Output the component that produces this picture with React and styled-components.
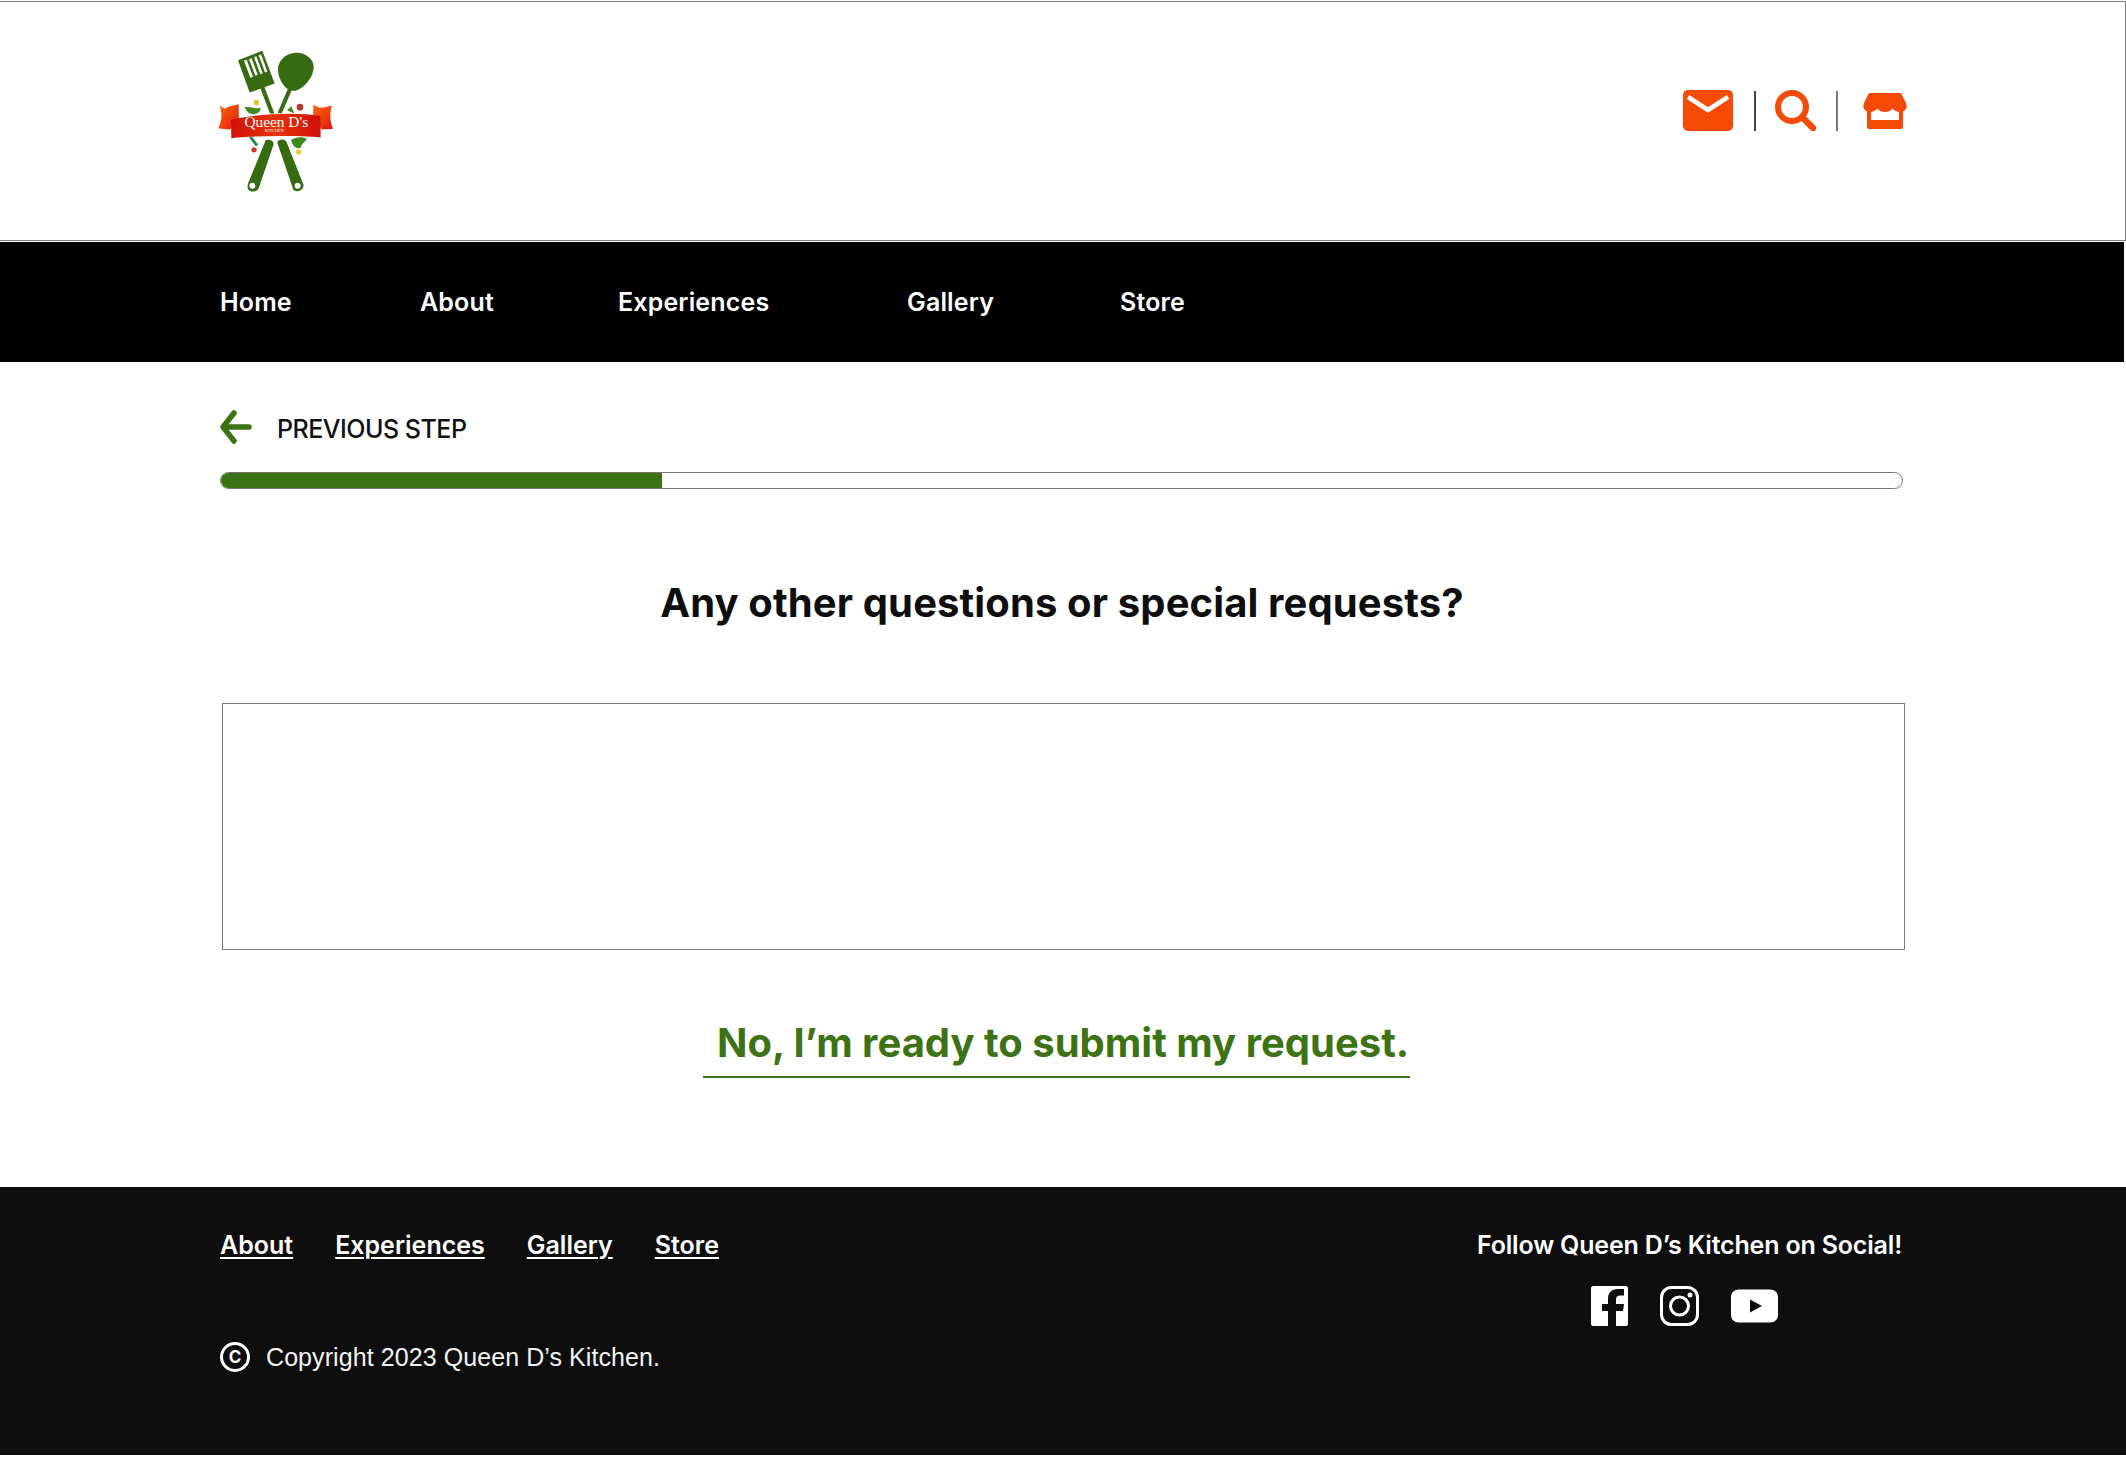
import React from "react";
import styled, { createGlobalStyle } from "styled-components";

const Global = createGlobalStyle`
  html, body { margin: 0; padding: 0; background: #fff; }
  body { font-family: Inter, "Liberation Sans", sans-serif; color: #0e0e0e; }
  * { box-sizing: border-box; }
`;
const Page = styled.div`
  width: 2126px;
  min-height: 1459px;
  display: flex;
  flex-direction: column;
`;
const Header = styled.header`
  height: 240px;
  margin: 1px 0 1px;
  border-top: 1px solid #808080;
  border-right: 1px solid #808080;
  border-bottom: 1px solid #808080;
  padding: 48px 218px 0 218px;
  display: flex;
  justify-content: space-between;
  align-items: flex-start;
`;
const Logo = styled.svg`
  width: 115px;
  height: 142px;
  display: block;
`;
const HeaderIcons = styled.div`
  display: flex;
  align-items: center;
  margin-top: 40px;
`;
const Sep = styled.span`
  width: 2px;
  height: 40px;
  background: ${(p) => p.$c};
  margin: 0 ${(p) => p.$r}px 0 ${(p) => p.$l}px;
`;
const IconSvg = styled.svg`
  display: block;
  flex: none;
`;
const NavBar = styled.nav`
  height: 120px;
  margin-right: 2px;
  background: #000;
  padding-left: 220px;
  display: grid;
  grid-template-columns: 200px 198px 289px 213px auto;
  align-items: center;
`;
const NavLink = styled.a`
  color: #fff;
  font-size: 25px;
  font-weight: 600;
  line-height: 1;
  letter-spacing: 0.15px;
`;
const Main = styled.main`
  flex: 1;
  padding: 0 222px 0 220px;
  display: flex;
  flex-direction: column;
`;
const Back = styled.div`
  display: flex;
  align-items: center;
  gap: 24px;
  height: 34px;
  margin-top: 48px;
`;
const BackText = styled.span`
  font-size: 25px;
  font-weight: 500;
  color: #111;
  letter-spacing: -0.5px;
  margin-top: 3px;
`;
const Track = styled.div`
  width: 1683px;
  height: 17px;
  margin-top: 28px;
  border: 1px solid #777;
  border-radius: 9px;
  overflow: hidden;
  background: #fff;
`;
const Fill = styled.div`
  height: 100%;
  background: #3d7314;
`;
const Title = styled.h1`
  margin: 90px 0 0;
  font-size: 40px;
  line-height: 48px;
  font-weight: 700;
  text-align: center;
  color: #0e0e0e;
  letter-spacing: 0.12px;
`;
const Box = styled.textarea`
  display: block;
  width: 1683px;
  height: 247px;
  margin: 76px 0 0 2px;
  border: 1px solid #7a7a7a;
  border-radius: 0;
  background: #fff;
  resize: none;
  outline: none;
`;
const SubmitRow = styled.div`
  display: flex;
  justify-content: flex-start;
  margin: 69px 0 0 483px;
`;
const Submit = styled.a`
  display: block;
  width: 707px;
  padding: 0 0 9px 14px;
  border-bottom: 2px solid #3d7314;
  color: #3d7314;
  font-size: 40px;
  line-height: 48px;
  font-weight: 700;
  white-space: nowrap;
`;
const Footer = styled.footer`
  height: 268px;
  margin-bottom: 4px;
  background: #0e0e0e;
  color: #fff;
  padding: 42px 224px 0 220px;
  display: flex;
  justify-content: space-between;
  align-items: flex-start;
`;
const FootLeft = styled.div`
  display: flex;
  flex-direction: column;
`;
const FootLinks = styled.div`
  display: flex;
  gap: 42px;
`;
const FootLink = styled.a`
  color: #fff;
  font-size: 25px;
  line-height: 32px;
  font-weight: 600;
  text-decoration: underline;
  text-underline-offset: 3px;
  text-decoration-thickness: 2px;
`;
const Copy = styled.div`
  display: flex;
  align-items: center;
  gap: 16px;
  margin-top: 80px;
`;
const CopyMark = styled.span`
  width: 30px;
  height: 30px;
  border: 3px solid #fff;
  border-radius: 50%;
  display: flex;
  align-items: center;
  justify-content: center;
  font-size: 17px;
  font-weight: 700;
  line-height: 1;
`;
const CopyText = styled.span`
  font-family: "Liberation Sans", Arial, sans-serif;
  font-size: 25px;
  line-height: 32px;
  color: #f4f4f4;
  letter-spacing: 0.08px;
`;
const FootRight = styled.div`
  display: flex;
  flex-direction: column;
  align-items: flex-end;
`;
const Follow = styled.div`
  font-size: 25px;
  line-height: 32px;
  font-weight: 600;
  letter-spacing: -0.18px;
`;
const Socials = styled.div`
  display: flex;
  align-items: center;
  height: 40px;
  margin: 25px 124px 0 0;
  gap: 32px;
`;

const leaf = "#3f8a1e";
const QueenLogo = () => (
  <Logo viewBox="85 60 345 425" aria-label="Queen D's Kitchen">
    <defs>
      <linearGradient id="ban" x1="0" x2="1" y1="0" y2="0">
        <stop offset="0" stopColor="#d2100a" />
        <stop offset="0.5" stopColor="#e8340a" />
        <stop offset="1" stopColor="#ce0f0c" />
      </linearGradient>
      <linearGradient id="wing" x1="0" x2="1" y1="0" y2="1">
        <stop offset="0" stopColor="#f8640f" />
        <stop offset="0.6" stopColor="#ee3a0c" />
        <stop offset="1" stopColor="#d3120c" />
      </linearGradient>
    </defs>
    <g fill="#376b12">
      <path fillRule="evenodd" d="M145 90 L218 62 L255 160 L180 187 Z M163 92 L182 143 L190 140 L171 89 Z M178 87 L197 137 L204 134 L186 84 Z M193 81 L212 132 L219 129 L200 78 Z M207 75 L226 127 L233 124 L214 72 Z" />
      <path d="M212 174 L224 170 L254 250 L241 250 Z" />
      <path d="M318 68 C345 66 373 85 372 112 C371 145 335 184 310 182 C285 180 265 145 265 118 C265 90 290 70 318 68 Z" />
      <path d="M295 175 L307 179 L276 250 L264 248 Z" />
      <path d="M228 330 C240 326 252 332 252 342 L208 472 C204 488 178 488 174 474 C173 468 174 464 176 458 Z" />
      <path d="M263 338 C263 328 282 324 290 334 L341 462 C346 480 318 492 310 476 Z" />
    </g>
    <path fill="#fff" d="M188 458 A9 9 0 1 0 188.1 476 A9 9 0 1 0 188 458 Z M324 458 A9 9 0 1 0 324.1 476 A9 9 0 1 0 324 458 Z" />
    <path fill={leaf} d="M165 232 C180 226 200 240 212 232 C214 244 205 252 190 252 C178 252 170 242 165 232 Z" />
    <path fill={leaf} d="M292 240 L305 228 L314 250 Z" />
    <path fill={leaf} d="M304 330 C320 318 340 320 352 326 C346 336 336 340 334 352 C322 358 310 350 304 330 Z" />
    <path fill="#2b8a55" d="M178 322 L186 318 L206 344 L198 348 Z" />
    <circle cx="200" cy="217" r="8" fill="#e8c020" />
    <circle cx="331" cy="231" r="10" fill="#b9382e" />
    <circle cx="193" cy="359" r="8" fill="#d8352a" />
    <circle cx="327" cy="365" r="8" fill="#eccb2a" />
    <path fill="url(#wing)" d="M90 226 L104 236 L120 228 L147 222 L148 292 L126 288 L122 298 L96 296 L86 294 C98 270 98 250 90 226 Z" />
    <path fill="url(#wing)" d="M371 224 L386 232 L404 232 L426 226 C420 250 420 272 430 296 L396 298 L390 288 L370 292 Z" />
    <path fill="url(#ban)" d="M124 268 C200 252 320 244 392 258 L393 322 C320 316 200 316 125 324 Z" />
    <text x="260" y="290" textAnchor="middle" fontFamily="'Liberation Serif', serif" fontSize="46" fill="#fff">Queen D's</text>
    <text x="254" y="305" textAnchor="middle" fontFamily="'Liberation Serif', serif" fontSize="13" fill="#fff">KITCHEN</text>
  </Logo>
);

export default function App() {
  return (
    <Page>
      <Global />
      <Header>
        <QueenLogo />
        <HeaderIcons>
          <IconSvg width="50" height="41" viewBox="0 0 50 41">
            <rect width="50" height="41" rx="5" fill="#f64a07" />
            <path d="M5 7 L25 20 L45 7" fill="none" stroke="#fff" strokeWidth="4.5" />
          </IconSvg>
          <Sep $c="#444" $l={21} $r={19} />
          <IconSvg width="41" height="41" viewBox="0 0 41 41">
            <circle cx="17" cy="17" r="14" fill="none" stroke="#f64a07" strokeWidth="6" />
            <path d="M27 27 L38 38" stroke="#f64a07" strokeWidth="6.5" strokeLinecap="round" />
          </IconSvg>
          <Sep $c="#777" $l={20} $r={25} />
          <IconSvg width="44" height="36" viewBox="0 0 44 36">
            <path fill="#f64a07" d="M7 0 H37 C38 0 39 1 39 2 L43 10 C45 15 42 19 37 19 C34 19 31 17.5 29.5 15.5 C28 18 25 19 22 19 C19 19 16 18 14.5 15.5 C13 17.5 10 19 7 19 C2 19 -1 15 1 10 L5 2 C5 1 6 0 7 0 Z" />
            <path fill="#f64a07" d="M4 18 H8 V27 H36 V18 H40 V34 C40 35 39 36 38 36 H6 C5 36 4 35 4 34 Z" />
          </IconSvg>
        </HeaderIcons>
      </Header>
      <NavBar>
        <NavLink>Home</NavLink>
        <NavLink>About</NavLink>
        <NavLink>Experiences</NavLink>
        <NavLink>Gallery</NavLink>
        <NavLink>Store</NavLink>
      </NavBar>
      <Main>
        <Back>
          <IconSvg width="33" height="34" viewBox="0 0 33 34">
            <path d="M14 3 L3 17 L14 31 M4 17 H29" fill="none" stroke="#3d7314" strokeWidth="5.5" strokeLinecap="round" strokeLinejoin="round" />
          </IconSvg>
          <BackText>PREVIOUS STEP</BackText>
        </Back>
        <Track>
          <Fill style={{ width: `${(442 / 1683) * 100}%` }} />
        </Track>
        <Title>Any other questions or special requests?</Title>
        <Box aria-label="Any other questions or special requests?" />
        <SubmitRow>
          <Submit>No, I’m ready to submit my request.</Submit>
        </SubmitRow>
      </Main>
      <Footer>
        <FootLeft>
          <FootLinks>
            <FootLink>About</FootLink>
            <FootLink>Experiences</FootLink>
            <FootLink>Gallery</FootLink>
            <FootLink>Store</FootLink>
          </FootLinks>
          <Copy>
            <CopyMark>C</CopyMark>
            <CopyText>Copyright 2023 Queen D’s Kitchen.</CopyText>
          </Copy>
        </FootLeft>
        <FootRight>
          <Follow>Follow Queen D’s Kitchen on Social!</Follow>
          <Socials>
            <IconSvg width="37" height="40" viewBox="0 0 37 40">
              <path fill="#fff" d="M2 0 H35 C36 0 37 1 37 2 V38 C37 39 36 40 35 40 H25 V25 H32 L33 18 H25 V13.5 C25 11 26.5 9.5 29 9.5 H33 V3 H27 C20.5 3 17 7 17 12.5 V18 H11 V25 H17 V40 H2 C1 40 0 39 0 38 V2 C0 1 1 0 2 0 Z" />
            </IconSvg>
            <IconSvg width="39" height="40" viewBox="0 0 39 40">
              <rect x="1.5" y="1.5" width="36" height="37" rx="10" fill="none" stroke="#fff" strokeWidth="3" />
              <circle cx="19.5" cy="20" r="9" fill="none" stroke="#fff" strokeWidth="3" />
              <circle cx="30" cy="9" r="2.5" fill="#fff" />
            </IconSvg>
            <IconSvg width="47" height="34" viewBox="0 0 47 34">
              <path fill="#fff" fillRule="evenodd" d="M8 0.5 H39 C44 0.5 47 4 47 8 V26 C47 30 44 33.5 39 33.5 H8 C3 33.5 0 30 0 26 V8 C0 4 3 0.5 8 0.5 Z M19 10.5 V23.5 L31 17 Z" />
            </IconSvg>
          </Socials>
        </FootRight>
      </Footer>
    </Page>
  );
}
